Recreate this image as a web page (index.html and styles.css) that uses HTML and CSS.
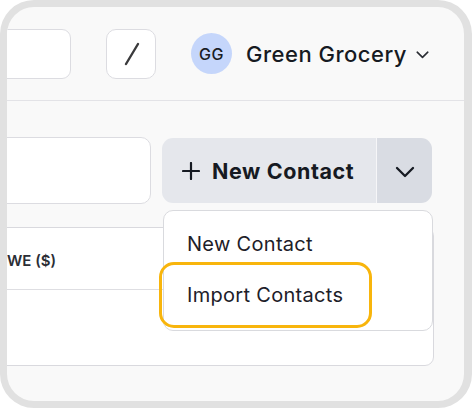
FILE: index.html
```html
<!DOCTYPE html>
<html>
<head>
<meta charset="utf-8">
<link rel="stylesheet" href="styles.css">
</head>
<body>
<div class="frame">
  <header class="topbar">
    <div class="search-box"></div>
    <div class="kbd">
      <svg width="20" height="26" viewBox="0 0 20 26"><line x1="4" y1="23" x2="16" y2="3" stroke="#3a3a3c" stroke-width="2.4" stroke-linecap="round"/></svg>
    </div>
    <div class="account">
      <div class="avatar">GG</div>
      <span class="account-name">Green Grocery</span>
      <svg class="account-chev" width="13" height="8" viewBox="0 0 13 8"><path d="M1.2 1.2 L6.5 6.3 L11.8 1.2" fill="none" stroke="#2a2d33" stroke-width="1.6" stroke-linecap="round" stroke-linejoin="round"/></svg>
    </div>
  </header>
  <main class="content">
    <div class="toolbar">
      <div class="filter-box"></div>
      <div class="split">
        <button class="split-main">
          <svg width="18" height="18" viewBox="0 0 18 18"><path d="M9 1 V17 M1 9 H17" stroke="#161a22" stroke-width="2.2" stroke-linecap="round"/></svg>
          <span>New Contact</span>
        </button>
        <button class="split-toggle">
          <svg width="20" height="12" viewBox="0 0 20 12"><path d="M2 2 L10 10 L18 2" fill="none" stroke="#161a22" stroke-width="2.3" stroke-linecap="round" stroke-linejoin="round"/></svg>
        </button>
      </div>
      <div class="menu">
        <div class="menu-item">New Contact</div>
        <div class="menu-item focused">Import Contacts</div>
      </div>
    </div>
    <div class="table">
      <div class="table-head"><span class="col">WE ($)</span></div>
      <div class="table-body"></div>
    </div>
  </main>
</div>
</body>
</html>
```
FILE: styles.css
```css
* { box-sizing: border-box; }
html, body { margin: 0; padding: 0; background: #ffffff; }
body { font-family: Inter, "Noto Sans", sans-serif; color: #161a22; }

.frame {
  width: 472px;
  height: 408px;
  border: 7px solid #e1e1e1;
  border-right-width: 8px;
  border-radius: 34px;
  background: #f9f9f9;
  overflow: hidden;
}

.topbar {
  height: 94px;
  border-bottom: 1px solid #e3e3e7;
  display: flex;
  align-items: center;
  justify-content: flex-end;
  padding-right: 35px;
  gap: 35px;
}
.search-box {
  flex: 0 0 220px;
  height: 50px;
  background: #fff;
  border: 1px solid #dcdce1;
  border-radius: 9px;
}
.kbd {
  flex: 0 0 50px;
  height: 50px;
  background: #fff;
  border: 1px solid #dcdce1;
  border-radius: 10px;
  display: flex;
  align-items: center;
  justify-content: center;
}
.kbd svg { display: block; margin-left: 2px; }
.account { display: flex; align-items: center; flex: 0 0 auto; }
.avatar {
  width: 41px; height: 41px;
  border-radius: 50%;
  background: #c5d6fb;
  display: flex; align-items: center; justify-content: center;
  font-size: 16px; font-weight: 500; color: #1a1d24;
  letter-spacing: 0.5px;
}
.account-name {
  margin-left: 14px;
  font-size: 22px; font-weight: 500; color: #161a22;
  letter-spacing: 0.5px;
}
.account-chev { margin-left: 9px; display: block; margin-top: 2px; }

.content { padding: 37px 32px 0 0; }
.toolbar {
  position: relative;
  display: flex;
  justify-content: flex-end;
  gap: 11px;
}
.filter-box {
  flex: 0 0 200px;
  height: 67px;
  margin-top: -1px;
  background: #fff;
  border: 1px solid #dcdce1;
  border-radius: 10px;
}
.split {
  flex: 0 0 270px;
  height: 65px;
  display: flex;
  border-radius: 11px;
  overflow: hidden;
}
.split > button {
  border: none; margin: 0; font-family: inherit; color: inherit;
  display: flex; align-items: center;
}
.split > .split-main {
  flex: 0 0 215px;
  background: #e5e7ec;
  padding-left: 20px;
  gap: 12px;
  font-size: 21.5px; font-weight: 700;
  letter-spacing: 0.6px;
  border-right: 1px solid #f6f6f8;
}
.split-main svg { display: block; }
.split > .split-toggle {
  flex: 1;
  background: #d9dce3;
  justify-content: center;
  padding: 0;
}
.split-toggle svg { display: block; margin-top: 2px; }

.menu {
  position: absolute;
  top: 72px;
  right: -1px;
  width: 270px;
  height: 121px;
  background: #fff;
  border: 1px solid #d9dade;
  border-radius: 10px;
  padding-top: 8px;
  z-index: 2;
  font-size: 20px;
  letter-spacing: 0.3px;
  color: #1d2028;
}
.menu-item {
  height: 50px;
  display: flex; align-items: center;
  padding-left: 23px;
}
.menu-item.focused {
  width: fit-content;
  height: 66px;
  margin-top: -7px;
  margin-left: -5px;
  border: 3px solid #f8b50c;
  border-radius: 15px;
  padding: 0 26px 0 25px;
}

.table {
  margin-top: 23px;
  margin-left: -60px;
  margin-right: -2px;
  height: 139px;
  background: #fff;
  border: 1px solid #d9d9de;
  border-radius: 9px;
}
.table-head {
  height: 62px;
  border-bottom: 1px solid #dedee2;
  display: flex; align-items: center;
  padding-left: 59px;
}
.col {
  font-size: 15px; font-weight: 600; color: #2b2e35;
  margin-top: 4px;
}
```
